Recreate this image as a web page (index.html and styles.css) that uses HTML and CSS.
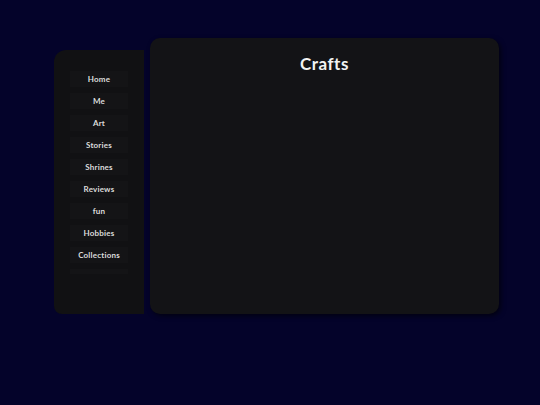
FILE: index.html
```html
<!DOCTYPE html>
<html>
<head>
<meta charset="utf-8">
<link rel="stylesheet" href="styles.css">
</head>
<body>
<div class="layout">
  <aside class="sidebar">
    <nav class="nav">
      <a class="nav-item">Home</a>
      <a class="nav-item">Me</a>
      <a class="nav-item">Art</a>
      <a class="nav-item">Stories</a>
      <a class="nav-item">Shrines</a>
      <a class="nav-item">Reviews</a>
      <a class="nav-item">fun</a>
      <a class="nav-item">Hobbies</a>
      <a class="nav-item">Collections</a>
      <a class="nav-item">Crafts</a>
    </nav>
  </aside>
  <main class="panel">
    <h1 class="title">Crafts</h1>
  </main>
</div>
</body>
</html>
```

FILE: styles.css
```css
html, body {
  margin: 0;
  padding: 0;
  background: #04032a;
  width: 540px;
  height: 405px;
  overflow: hidden;
}
.layout {
  display: flex;
  align-items: flex-end;
  gap: 6px;
  padding-left: 54px;
  height: 314px;
}
.sidebar {
  width: 90px;
  height: 264px;
  background: #111113;
  border-radius: 12px 0 0 8px;
  padding-top: 21px;
  box-sizing: border-box;
  display: flex;
  justify-content: center;
}
.nav {
  width: 58px;
  height: 203px;
  overflow: hidden;
  display: flex;
  flex-direction: column;
  gap: 6px;
}
.nav-item {
  display: flex;
  align-items: center;
  justify-content: center;
  height: 16px;
  flex-shrink: 0;
  background: #141416;
  color: #dcdcdc;
  font-family: "Lato", "DejaVu Sans", sans-serif;
  font-weight: 700;
  font-size: 8px;
  letter-spacing: 0.2px;
}
.panel {
  width: 349px;
  height: 276px;
  background: #131316;
  border-radius: 10px;
  box-shadow: 2px 2px 5px rgba(0,0,0,0.6);
  display: flex;
  flex-direction: column;
  align-items: center;
}
.title {
  margin: 15px 0 0;
  color: #f2f2f2;
  font-family: "Lato", "DejaVu Sans", sans-serif;
  font-weight: 700;
  font-size: 17px;
  letter-spacing: 0.5px;
}
```
